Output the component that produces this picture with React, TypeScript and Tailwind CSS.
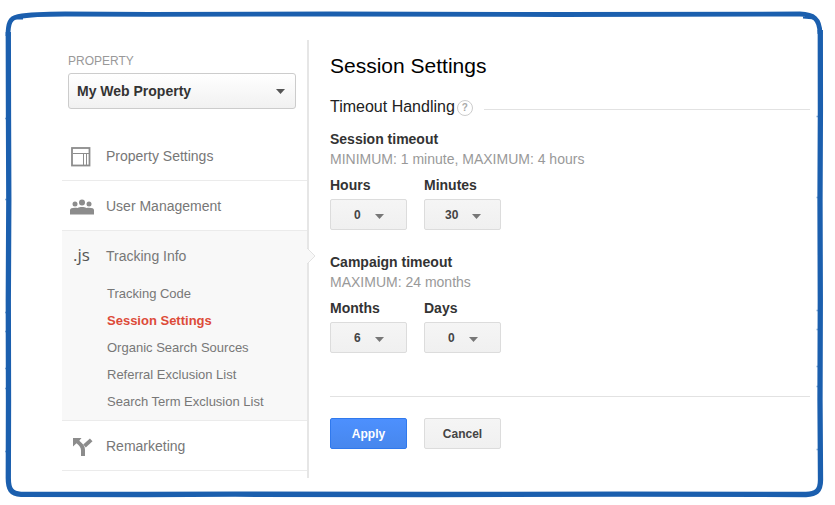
import type { ReactNode } from "react";

type Field = {
  id: string;
  label: string;
  value: string;
  options: string[];
};

type Group = {
  title: string;
  hint: string;
  fields: Field[];
};

const groups: Group[] = [
  {
    title: "Session timeout",
    hint: "MINIMUM: 1 minute, MAXIMUM: 4 hours",
    fields: [
      { id: "hours", label: "Hours", value: "0", options: ["0", "1", "2", "3", "4"] },
      { id: "minutes", label: "Minutes", value: "30", options: ["0", "15", "30", "45"] },
    ],
  },
  {
    title: "Campaign timeout",
    hint: "MAXIMUM: 24 months",
    fields: [
      { id: "months", label: "Months", value: "6", options: ["0", "3", "6", "12", "24"] },
      { id: "days", label: "Days", value: "0", options: ["0", "7", "14", "21"] },
    ],
  },
];

const trackingLinks = [
  "Tracking Code",
  "Session Settings",
  "Organic Search Sources",
  "Referral Exclusion List",
  "Search Term Exclusion List",
];

function SketchFrame() {
  return (
    <svg className="pointer-events-none absolute inset-0 h-full w-full" viewBox="0 0 835 505" preserveAspectRatio="none" fill="none" stroke="#1b5fae" aria-hidden="true">
      <path strokeWidth="4.800" d="M8 36 C8 23 10 18 18 16.500 C30 14.500 45 14 65 14 L150 14.300 L330 14 L560 14.500 L800 14 C813 14.500 820 18 820 34" />
      <path strokeWidth="5.300" d="M8.300 32 L8.500 120 L8.800 200 L8.300 300 L8.500 400 L8.300 478 C8.300 489 11 494 21 494.300 L145 494.500 L235 494.200 L430 494.500 L620 494.200 L806 494.500 C816 494 820.500 491 820.500 480 L820 400 L820.300 300 L820 200 L820.400 110 L820.300 30" />
      <path strokeWidth="2" d="M12 18.500 L23 18.500 M803 17.500 L815 18.500" />
      <path strokeWidth="1.500" opacity="0.5" d="M5 118.500 h2 M5 199.500 h2 M5 312.500 h2 M5 331.500 h2 M5 368.500 h2 M5 388.500 h2 M5 451.500 h2 M816.500 116.500 h2 M816.500 197.500 h2 M816.500 310.500 h2 M816.500 329.500 h2 M816.500 366.500 h2 M816.500 386.500 h2 M816.500 449.500 h2" />
    </svg>
  );
}

function Caret({ className }: { className: string }) {
  return (
    <svg className={"pointer-events-none absolute top-1/2 h-[5px] w-[9px] " + className} viewBox="0 0 9 5" fill="currentColor" aria-hidden="true">
      <path d="M0 0h9L4.500 5z" />
    </svg>
  );
}

function LayoutIcon() {
  return (
    <svg width="20" height="20" viewBox="0 0 20 20" fill="none" stroke="#8c8c8c" aria-hidden="true">
      <rect x="1" y="1" width="17.500" height="17.500" strokeWidth="1.800" />
      <path d="M2 6.500h16M12.500 6.500v12M15.500 6.500v12" strokeWidth="1" />
    </svg>
  );
}

function PeopleIcon() {
  return (
    <svg width="24" height="16" viewBox="0 0 24 16" fill="#8c8c8c" aria-hidden="true">
      <circle cx="12" cy="3.500" r="3" />
      <circle cx="5" cy="5" r="2.500" />
      <circle cx="19" cy="5" r="2.500" />
      <path d="M0 15.500v-4.200C0 9.500 2 8.800 5 8.800c1 0 1.800.1 2.600.3C8.800 8.300 10.300 8 12 8s3.200.3 4.400 1.100c.8-.2 1.600-.3 2.600-.3 3 0 5 .7 5 2.500v4.200z" />
    </svg>
  );
}

function SplitIcon() {
  return (
    <svg width="20" height="20" viewBox="0 0 20 20" aria-hidden="true">
      <path d="M0 1h8.500L6.300 3.700C10 6.800 12 9 12 13v6H8v-5.500C8 10.500 6.500 8.700 3.500 6.300L0 9.500z" fill="#8c8c8c" />
      <path d="M11.500 9L18.200 2.800" stroke="#8c8c8c" strokeWidth="3.800" />
    </svg>
  );
}

function NavItem({ icon, label }: { icon: ReactNode; label: string }) {
  return (
    <a href="#" className="flex h-[49px] items-center pt-[2px] text-[14px] text-[#777]">
      <span className="flex w-11 items-center pl-2">{icon}</span>
      {label}
    </a>
  );
}

function SelectField({ id, label, value, options }: Field) {
  const wide = value.length > 1;
  return (
    <div className="w-[77px]">
      <label htmlFor={id} className="block text-[14px] leading-5 font-bold text-[#333]">{label}</label>
      <div className="relative mt-1">
        <select id={id} defaultValue={value}
          className={[
            "block h-[31px] w-full appearance-none rounded-xs border border-[#dcdcdc] bg-linear-to-b from-[#f5f5f5] to-[#f0f0f0] text-[12px] font-bold text-[#444]",
            wide ? "pl-5" : "pl-[23px]",
          ].join(" ")}>
          {options.map((o) => <option key={o}>{o}</option>)}
        </select>
        <Caret className={wide ? "left-12 -mt-px text-[#777]" : "left-[45px] -mt-px text-[#777]"} />
      </div>
    </div>
  );
}

function Sidebar() {
  return (
    <aside className="relative w-[247px] shrink-0 border-r-2 border-[#e6e6e6] pb-[7px]">
      <div className="pt-[13px] pr-[11px] pl-[6px]">
        <label htmlFor="property" className="block text-[12px] leading-4 text-[#999]">PROPERTY</label>
        <div className="relative mt-1">
          <select id="property" className="block h-9 w-full appearance-none rounded-[3px] border border-[#ccc] bg-linear-to-b from-white to-[#f1f1f1] pt-px pl-2 text-[14px] font-bold text-[#333]">
            <option>My Web Property</option>
          </select>
          <Caret className="right-[11px] -mt-[2px] text-[#555]" />
        </div>
      </div>
      <nav className="mt-[22px]">
        <ul>
          <li className="border-b border-[#ebebeb]"><NavItem icon={<span className="pl-px"><LayoutIcon /></span>} label="Property Settings" /></li>
          <li className="border-b border-[#ebebeb]"><NavItem icon={<PeopleIcon />} label="User Management" /></li>
          <li className="relative border-b border-[#ebebeb] bg-[#f8f8f8] pb-[5px]">
            <NavItem icon={<span className="pl-[3px] pb-1 font-['Open_Sans',sans-serif] text-[17px] leading-5 text-[#555]">.js</span>} label="Tracking Info" />
            <svg className="absolute top-4 -right-[9px]" width="10" height="18" viewBox="0 0 10 18" aria-hidden="true">
              <path d="M0 0L1 1L9 9L1 17L0 18z" fill="#f8f8f8" />
              <path d="M1 1L9 9L1 17" fill="none" stroke="#e2e2e2" />
            </svg>
            <ul className="pl-[45px]">
              {trackingLinks.map((t) => (
                <li key={t} className="text-[13px] leading-[27px]">
                  <a href="#" className={t === "Session Settings" ? "font-bold text-[#dd4b39]" : "text-[#777]"}>{t}</a>
                </li>
              ))}
            </ul>
          </li>
          <li className="border-b border-[#ebebeb]"><NavItem icon={<span className="pl-[3px]"><SplitIcon /></span>} label="Remarketing" /></li>
        </ul>
      </nav>
    </aside>
  );
}

export default function App() {
  return (
    <div className="relative bg-white pt-10 pr-[25px] pb-[27px] pl-[62px] font-['Liberation_Sans',Arial,sans-serif]">
      <SketchFrame />
      <div className="relative flex">
        <Sidebar />
        <main className="min-w-0 flex-1 pt-[14px] pl-[21px]">
          <h1 className="text-[21px] leading-6 text-black">Session Settings</h1>
          <div className="mt-[17px] flex h-6 items-center">
            <h2 className="text-[16px] text-[#222]">Timeout Handling</h2>
            <button type="button" aria-label="Help" className="mt-[2px] ml-[2px] size-4 rounded-full border border-[#ccc] text-[10px] leading-[14px] font-bold text-[#aaa]">?</button>
            <div className="mt-1 ml-[11px] h-px flex-1 bg-[#e2e2e2]" />
          </div>
          <form>
            {groups.map((g, i) => (
              <section key={g.title} className={i === 0 ? "mt-[10px]" : "mt-[22px]"}>
                <h3 className="text-[14px] leading-5 font-bold text-[#333]">{g.title}</h3>
                <p className="text-[14px] leading-5 text-[#999]">{g.hint}</p>
                <div className="mt-[6px] flex gap-[17px]">
                  {g.fields.map((f) => <SelectField key={f.id} {...f} />)}
                </div>
              </section>
            ))}
            <div className="mt-[43px] flex gap-[17px] border-t border-[#e2e2e2] pt-[21px] text-[12px] font-bold">
              <button type="button" className="h-[31px] w-[77px] rounded-xs border border-[#3079ed] bg-linear-to-b from-[#4d90fe] to-[#4787ed] text-white">Apply</button>
              <button type="button" className="h-[31px] w-[77px] rounded-xs border border-[#dcdcdc] bg-linear-to-b from-[#f5f5f5] to-[#f0f0f0] text-[#444]">Cancel</button>
            </div>
          </form>
        </main>
      </div>
    </div>
  );
}
